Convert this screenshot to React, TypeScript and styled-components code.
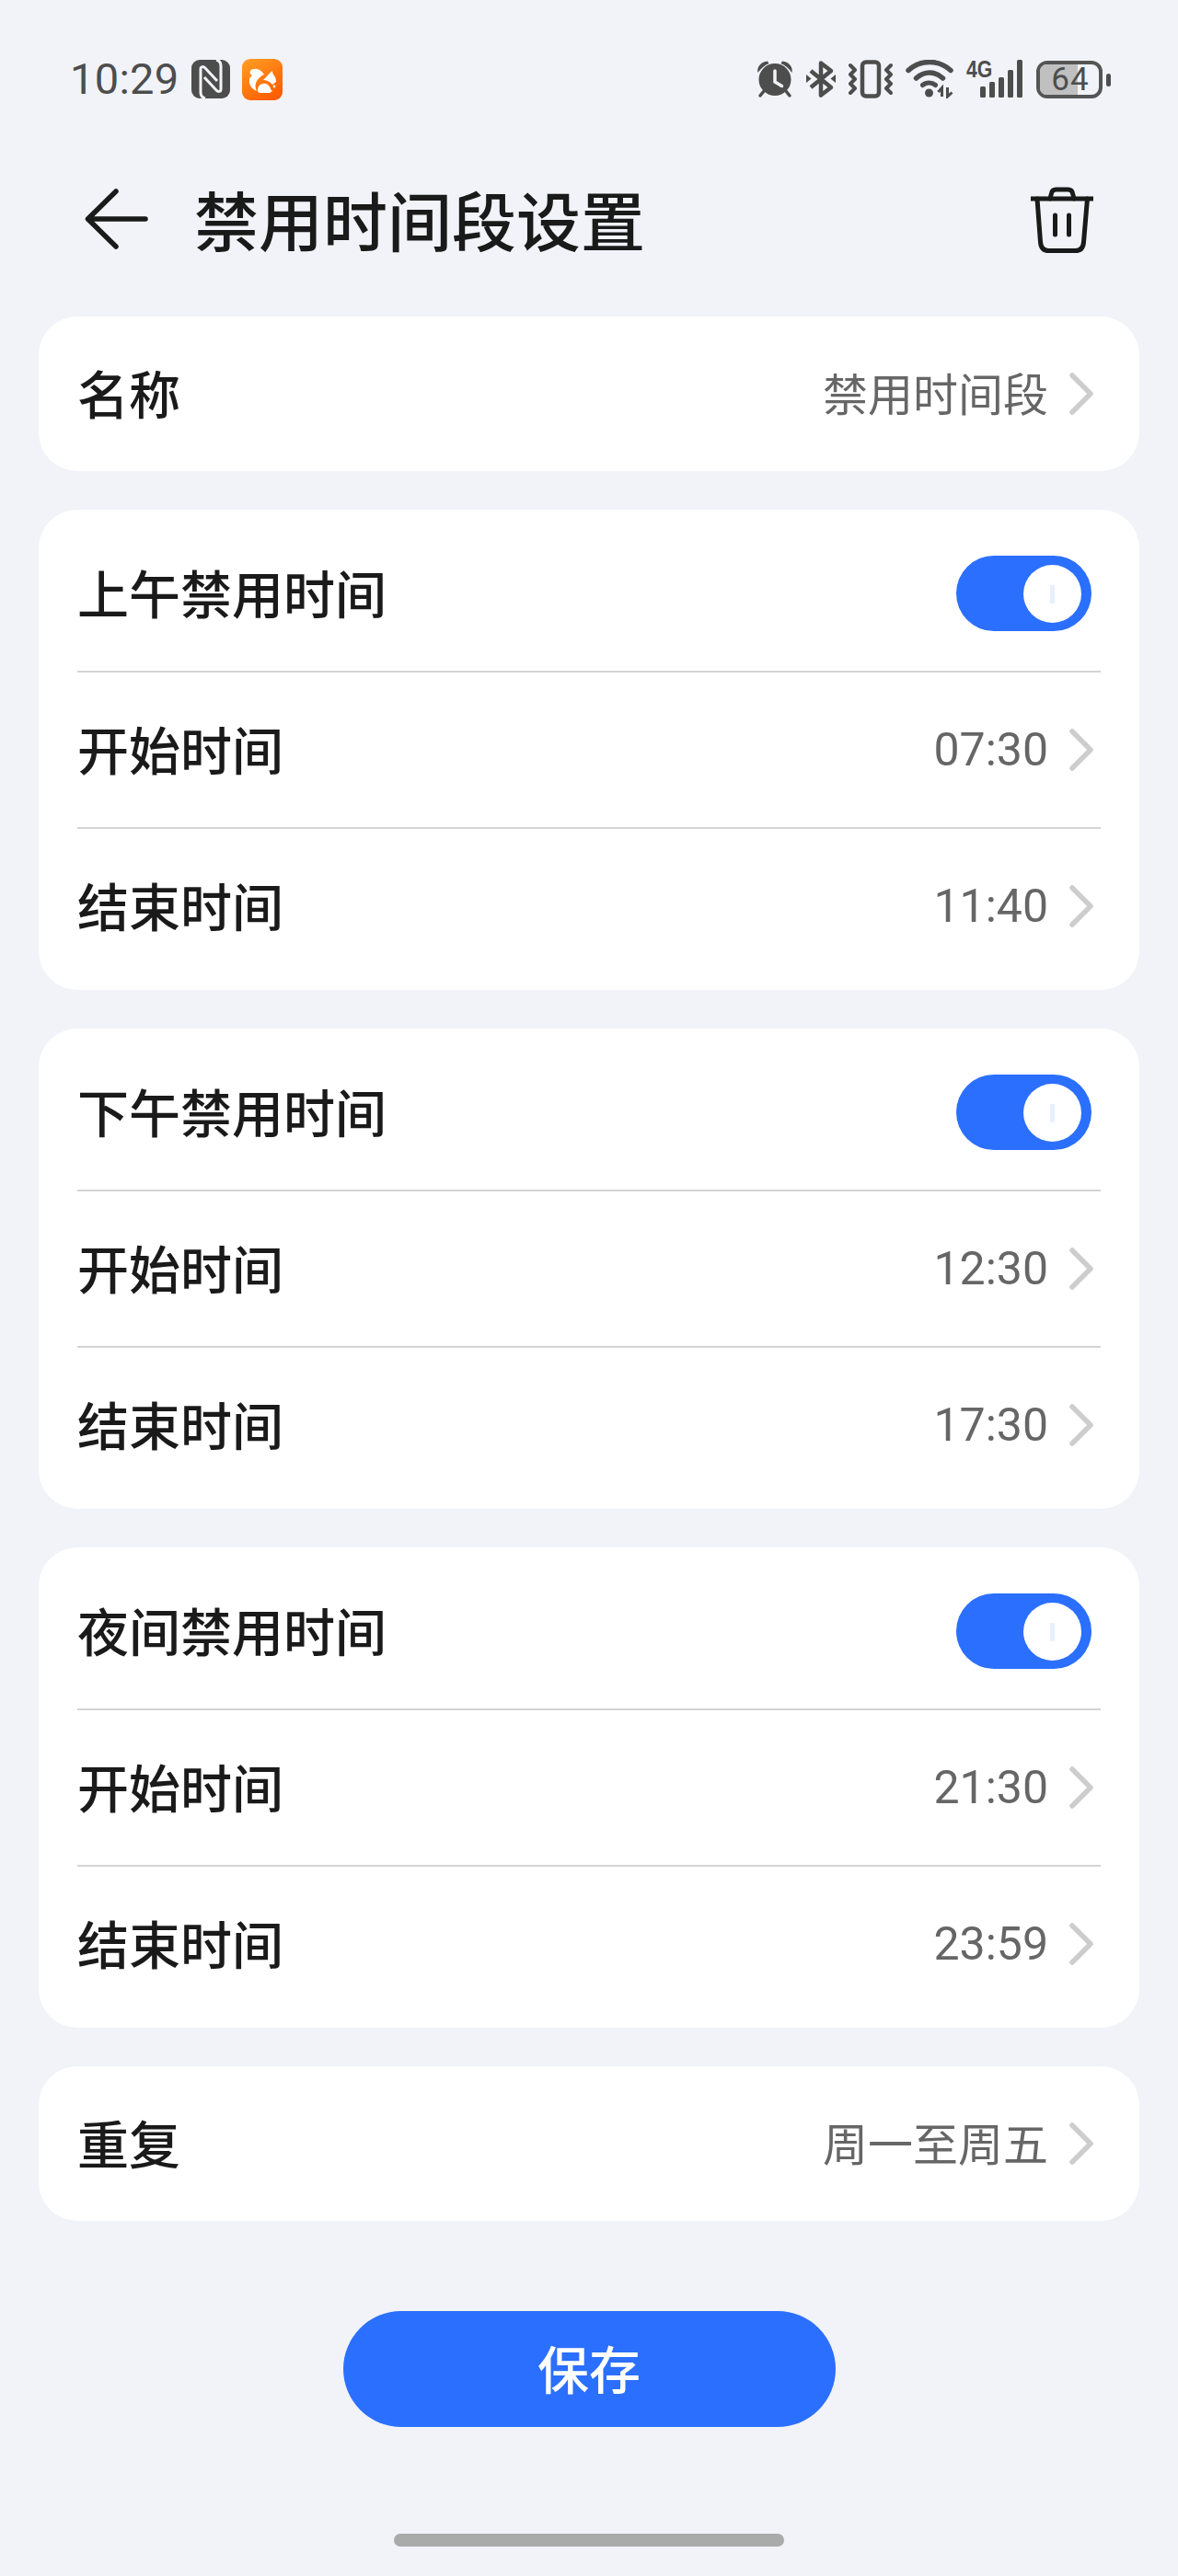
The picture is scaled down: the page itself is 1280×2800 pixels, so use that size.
import styled, { createGlobalStyle } from "styled-components"

const GlobalStyle = createGlobalStyle`
  html, body {
    margin: 0;
    padding: 0;
    background: #f1f3f8;
  }
  * {
    box-sizing: border-box;
  }
`

interface RowData {
  label: string
  value: string
}

interface SectionData {
  title: string
  rows: RowData[]
}

const sections: SectionData[] = [
  {
    title: "上午禁用时间",
    rows: [
      { label: "开始时间", value: "07:30" },
      { label: "结束时间", value: "11:40" },
    ],
  },
  {
    title: "下午禁用时间",
    rows: [
      { label: "开始时间", value: "12:30" },
      { label: "结束时间", value: "17:30" },
    ],
  },
  {
    title: "夜间禁用时间",
    rows: [
      { label: "开始时间", value: "21:30" },
      { label: "结束时间", value: "23:59" },
    ],
  },
]

const Chevron = () => (
  <ChevronIcon viewBox="0 0 26 46" fill="none">
    <path d="M3 3l20 20L3 43" stroke="#cdcdcd" strokeWidth="5.5" strokeLinecap="round" strokeLinejoin="round" />
  </ChevronIcon>
)

const LinkRow = ({ label, value }: RowData) => (
  <Row>
    <Label>{label}</Label>
    <RowEnd>
      <Value $time={value.includes(":")}>{value}</Value>
      <Chevron />
    </RowEnd>
  </Row>
)

const StatusIcons = () => (
  <StatusRight>
    <svg width="40" height="42" viewBox="0 0 40 42" fill="#4d4d4d">
      <circle cx="20" cy="21.500" r="17.500" />
      <path d="M1.500 14C0 8 5 2 12 1.500l1.500 2.500C8.500 6 4.500 10 1.500 14zM38.500 14C40 8 35 2 28 1.500L26.500 4c5 2 9 6 12 10z" />
      <path d="M8 34l-4 5M32 34l4 5" stroke="#4d4d4d" strokeWidth="3.5" strokeLinecap="round" />
      <path d="M20 12v12l7.500 4.500" stroke="#f1f3f8" strokeWidth="3.500" fill="none" strokeLinecap="round" />
    </svg>
    <svg width="32" height="42" viewBox="0 0 32 42" fill="none" stroke="#4d4d4d" strokeWidth="4.5" strokeLinejoin="round">
      <path d="M5 12l22 18-11 8.500v-35L27 12 5 30" />
      <path d="M0 16v9l5.500-4.500zM32 16v9l-5.500-4.500z" fill="#4d4d4d" strokeWidth="0" />
    </svg>
    <svg width="48" height="42" viewBox="0 0 48 42" fill="none" stroke="#4d4d4d" strokeWidth="4" strokeLinejoin="round">
      <rect x="15" y="2.500" width="18" height="37" rx="4" strokeWidth="4.500" />
      <path d="M2 6l5 5-5 5 5 5-5 5 5 5-5 5M46 6l-5 5 5 5-5 5 5 5-5 5 5 5" strokeLinecap="round" />
    </svg>
    <svg width="52" height="42" viewBox="0 0 52 42" fill="none" stroke="#4d4d4d" strokeWidth="5.500" strokeLinecap="round">
      <path d="M3 11.500c13-12 33-12 46 0" />
      <path d="M11.500 20c9-8 20-8 29 0" />
      <path d="M18.500 27.500c4-3.500 10-3.500 14 0" strokeWidth="5" />
      <circle cx="25.500" cy="36" r="4.500" fill="#4d4d4d" strokeWidth="0" />
      <path d="M39.500 40V30.500l-4 4.500M45.500 30v10l5-4.500" strokeWidth="3" strokeLinecap="butt" />
    </svg>
    <SignalWrap>
      <svg width="62" height="42" viewBox="0 0 62 42" fill="#4d4d4d">
        <rect x="15" y="29" width="6" height="12" rx="1.500" />
        <rect x="25" y="24" width="6" height="17" rx="1.500" />
        <rect x="35" y="19" width="6" height="22" rx="1.500" />
        <rect x="45" y="11" width="6" height="30" rx="1.500" />
        <rect x="55" y="0" width="6" height="41" rx="1.500" />
      </svg>
      <NetworkBadge>4G</NetworkBadge>
    </SignalWrap>
    <Battery>
      <BatteryFill $level={64} />
      <BatteryText>64</BatteryText>
      <BatteryTip />
    </Battery>
  </StatusRight>
)

const App = () => {
  return (
    <Page>
      <GlobalStyle />
      <StatusBar>
        <StatusLeft>
          <Clock>10:29</Clock>
          <svg width="42" height="42" viewBox="0 0 42 42">
            <rect width="42" height="42" rx="9" fill="#4d4d4d" />
            <path d="M27 0c4 1 5 3 5 7v25c0 3-3 3-5 1L14 19M15 42c-4-1-5-3-5-7V10c0-3 3-3 5-1l13 14" stroke="#f1f3f8" strokeWidth="3" fill="none" />
          </svg>
          <svg width="44" height="45" viewBox="0 0 44 45">
            <defs>
              <linearGradient id="ucGrad" x1="0.2" y1="0" x2="0.8" y2="1">
                <stop offset="0" stopColor="#ff9a22" />
                <stop offset="1" stopColor="#ff5a00" />
              </linearGradient>
            </defs>
            <rect width="44" height="45" rx="9" fill="url(#ucGrad)" />
            <path d="M9 13c3-4 11-3 15 4-3 1-6 4-8 7-2 4-2 7 0 11-5-2-9-7-8-12 0-3 2-4 3-5-2-1-3-3-2-5z" fill="#fff" />
            <path d="M23 23l9.500-10 1.500 4c2 2 3 5 3 8l-4 3c-2-3-7-5-10-5z" fill="#fff" />
            <path d="M17 34c0-6 5-8 9-7 3 1 5 4 5 6l2 2-3 2H20c-2 0-3-1-3-3z" fill="#fff" />
            <circle cx="35" cy="30" r="1.400" fill="#fff" />
          </svg>
        </StatusLeft>
        <StatusIcons />
      </StatusBar>

      <Header>
        <HeaderLeft>
          <svg width="70" height="68" viewBox="0 0 70 68" fill="none" stroke="#1a1a1a" strokeWidth="5.5" strokeLinecap="round" strokeLinejoin="round">
            <path d="M34 4L3.500 34 34 64M3.500 34H66" />
          </svg>
          <Title>禁用时间段设置</Title>
        </HeaderLeft>
        <TrashIcon viewBox="0 0 68 72" fill="none" stroke="#1a1a1a" strokeWidth="5" strokeLinecap="round" strokeLinejoin="round">
          <path d="M0 13h68" strokeLinecap="butt" />
          <path d="M7 13l3.500 47c.4 6 3.500 9.500 9 9.500h29c5.500 0 8.600-3.500 9-9.500L61.500 13" />
          <path d="M21 13l1.500-6c.5-2.500 2-4 5-4h13c3 0 4.500 1.500 5 4l1.500 6" />
          <path d="M26.500 31v21M41.500 31v21" />
        </TrashIcon>
      </Header>

      <Content>
        <Card>
          <SingleRow>
            <LinkRow label="名称" value="禁用时间段" />
          </SingleRow>
        </Card>

        {sections.map((section) => (
          <Card key={section.title} $grouped>
            <Row>
              <Label>{section.title}</Label>
              <Toggle>
                <Knob />
              </Toggle>
            </Row>
            {section.rows.map((row) => (
              <LinkRow key={row.label} label={row.label} value={row.value} />
            ))}
          </Card>
        ))}

        <Card>
          <SingleRow>
            <LinkRow label="重复" value="周一至周五" />
          </SingleRow>
        </Card>
      </Content>

      <SaveWrap>
        <SaveButton>
          <span>保存</span>
        </SaveButton>
      </SaveWrap>
      <HomeBar />
    </Page>
  )
}

export default App

const Page = styled.div`
  width: 1280px;
  height: 2800px;
  background: #f1f3f8;
  font-family: "Noto Sans CJK SC", "Roboto", sans-serif;
  color: #1a1a1a;
  overflow: hidden;
`

const StatusBar = styled.div`
  height: 138px;
  padding: 64px 82px 0 76px;
  display: flex;
  justify-content: space-between;
  align-items: flex-start;
`

const StatusLeft = styled.div`
  display: flex;
  align-items: center;
  height: 44px;
  gap: 13px;
`

const Clock = styled.span`
  font-family: "Roboto", sans-serif;
  font-size: 47px;
  line-height: 44px;
  letter-spacing: 0.3px;
  color: #4d4d4d;
`

const StatusRight = styled.div`
  display: flex;
  align-items: center;
  height: 44px;
  gap: 14px;
`

const SignalWrap = styled.div`
  position: relative;
  width: 62px;
  height: 42px;
`

const NetworkBadge = styled.span`
  position: absolute;
  top: -2px;
  left: 0;
  font-family: "Liberation Sans", sans-serif;
  font-size: 25px;
  font-weight: 700;
  line-height: 1;
  color: #4d4d4d;
  transform: scaleX(0.85);
  transform-origin: left top;
`

const Battery = styled.div`
  position: relative;
  width: 72px;
  height: 41px;
  border: 4px solid #555555;
  border-radius: 12px;
`

const BatteryFill = styled.div<{ $level: number }>`
  position: absolute;
  top: 0;
  bottom: 0;
  left: 0;
  width: ${(p) => p.$level}%;
  background: #c0c0c0;
  border-radius: 7px 0 0 7px;
`

const BatteryText = styled.span`
  position: absolute;
  inset: 0;
  padding-left: 2px;
  display: flex;
  align-items: center;
  justify-content: center;
  font-family: "Roboto", sans-serif;
  font-size: 35px;
  letter-spacing: 1px;
  line-height: 1;
  color: #4d4d4d;
`

const BatteryTip = styled.div`
  position: absolute;
  right: -13px;
  top: 10px;
  width: 5px;
  height: 14px;
  border-radius: 3px;
  background: #4d4d4d;
`

const Header = styled.div`
  height: 200px;
  padding: 0 92px 0 92px;
  margin-bottom: 6px;
  display: flex;
  align-items: center;
  justify-content: space-between;
`

const HeaderLeft = styled.div`
  display: flex;
  align-items: center;
  gap: 49px;
`

const Title = styled.h1`
  margin: 0;
  font-size: 70px;
  font-weight: 500;
  line-height: 1;
  color: #1a1a1a;
`

const TrashIcon = styled.svg`
  width: 68px;
  height: 72px;
  margin-top: 2px;
  overflow: visible;
`

const Content = styled.div`
  padding: 0 42px;
  display: flex;
  flex-direction: column;
  gap: 42px;
`

const Card = styled.div<{ $grouped?: boolean }>`
  background: #ffffff;
  border-radius: 42px;
  padding: ${(p) => (p.$grouped ? "7px 42px" : "0 42px")};
`

const Row = styled.div`
  height: 170px;
  display: flex;
  align-items: center;
  justify-content: space-between;
  border-top: 2px solid #d4d4d4;

  &:first-child {
    height: 168px;
    border-top: none;
  }
`

const SingleRow = styled.div`
  height: 168px;
`

const Label = styled.span`
  font-size: 56px;
  font-weight: 500;
  color: #1a1a1a;
  padding-bottom: 6px;
`

const RowEnd = styled.div`
  display: flex;
  align-items: center;
  gap: 23px;
  padding-right: 8px;
`

const Value = styled.span<{ $time: boolean }>`
  font-family: "Roboto", "Noto Sans CJK SC", sans-serif;
  font-size: ${(p) => (p.$time ? "50px" : "49px")};
  color: #666666;
  padding-bottom: ${(p) => (p.$time ? "0" : "6px")};
`

const ChevronIcon = styled.svg`
  width: 26px;
  height: 46px;
`

const Toggle = styled.div`
  position: relative;
  width: 147px;
  height: 82px;
  border-radius: 41px;
  background: #2b6fff;
  margin-right: 10px;
`

const Knob = styled.div`
  position: absolute;
  top: 10px;
  right: 11px;
  width: 63px;
  height: 63px;
  border-radius: 50%;
  background: #ffffff;

  &::after {
    content: "";
    position: absolute;
    left: 29px;
    top: 22px;
    width: 5px;
    height: 20px;
    background: #e8f0fe;
  }
`

const SaveWrap = styled.div`
  margin-top: 98px;
  display: flex;
  justify-content: center;
`

const SaveButton = styled.button`
  width: 535px;
  height: 126px;
  padding: 0 0 6px;
  border: none;
  border-radius: 63px;
  background: #2b6fff;
  color: #ffffff;
  font-family: "Noto Sans CJK SC", sans-serif;
  font-size: 56px;
  font-weight: 500;
`

const HomeBar = styled.div`
  width: 424px;
  height: 14px;
  margin: 116px auto 0;
  border-radius: 7px;
  background: #a9abab;
`
